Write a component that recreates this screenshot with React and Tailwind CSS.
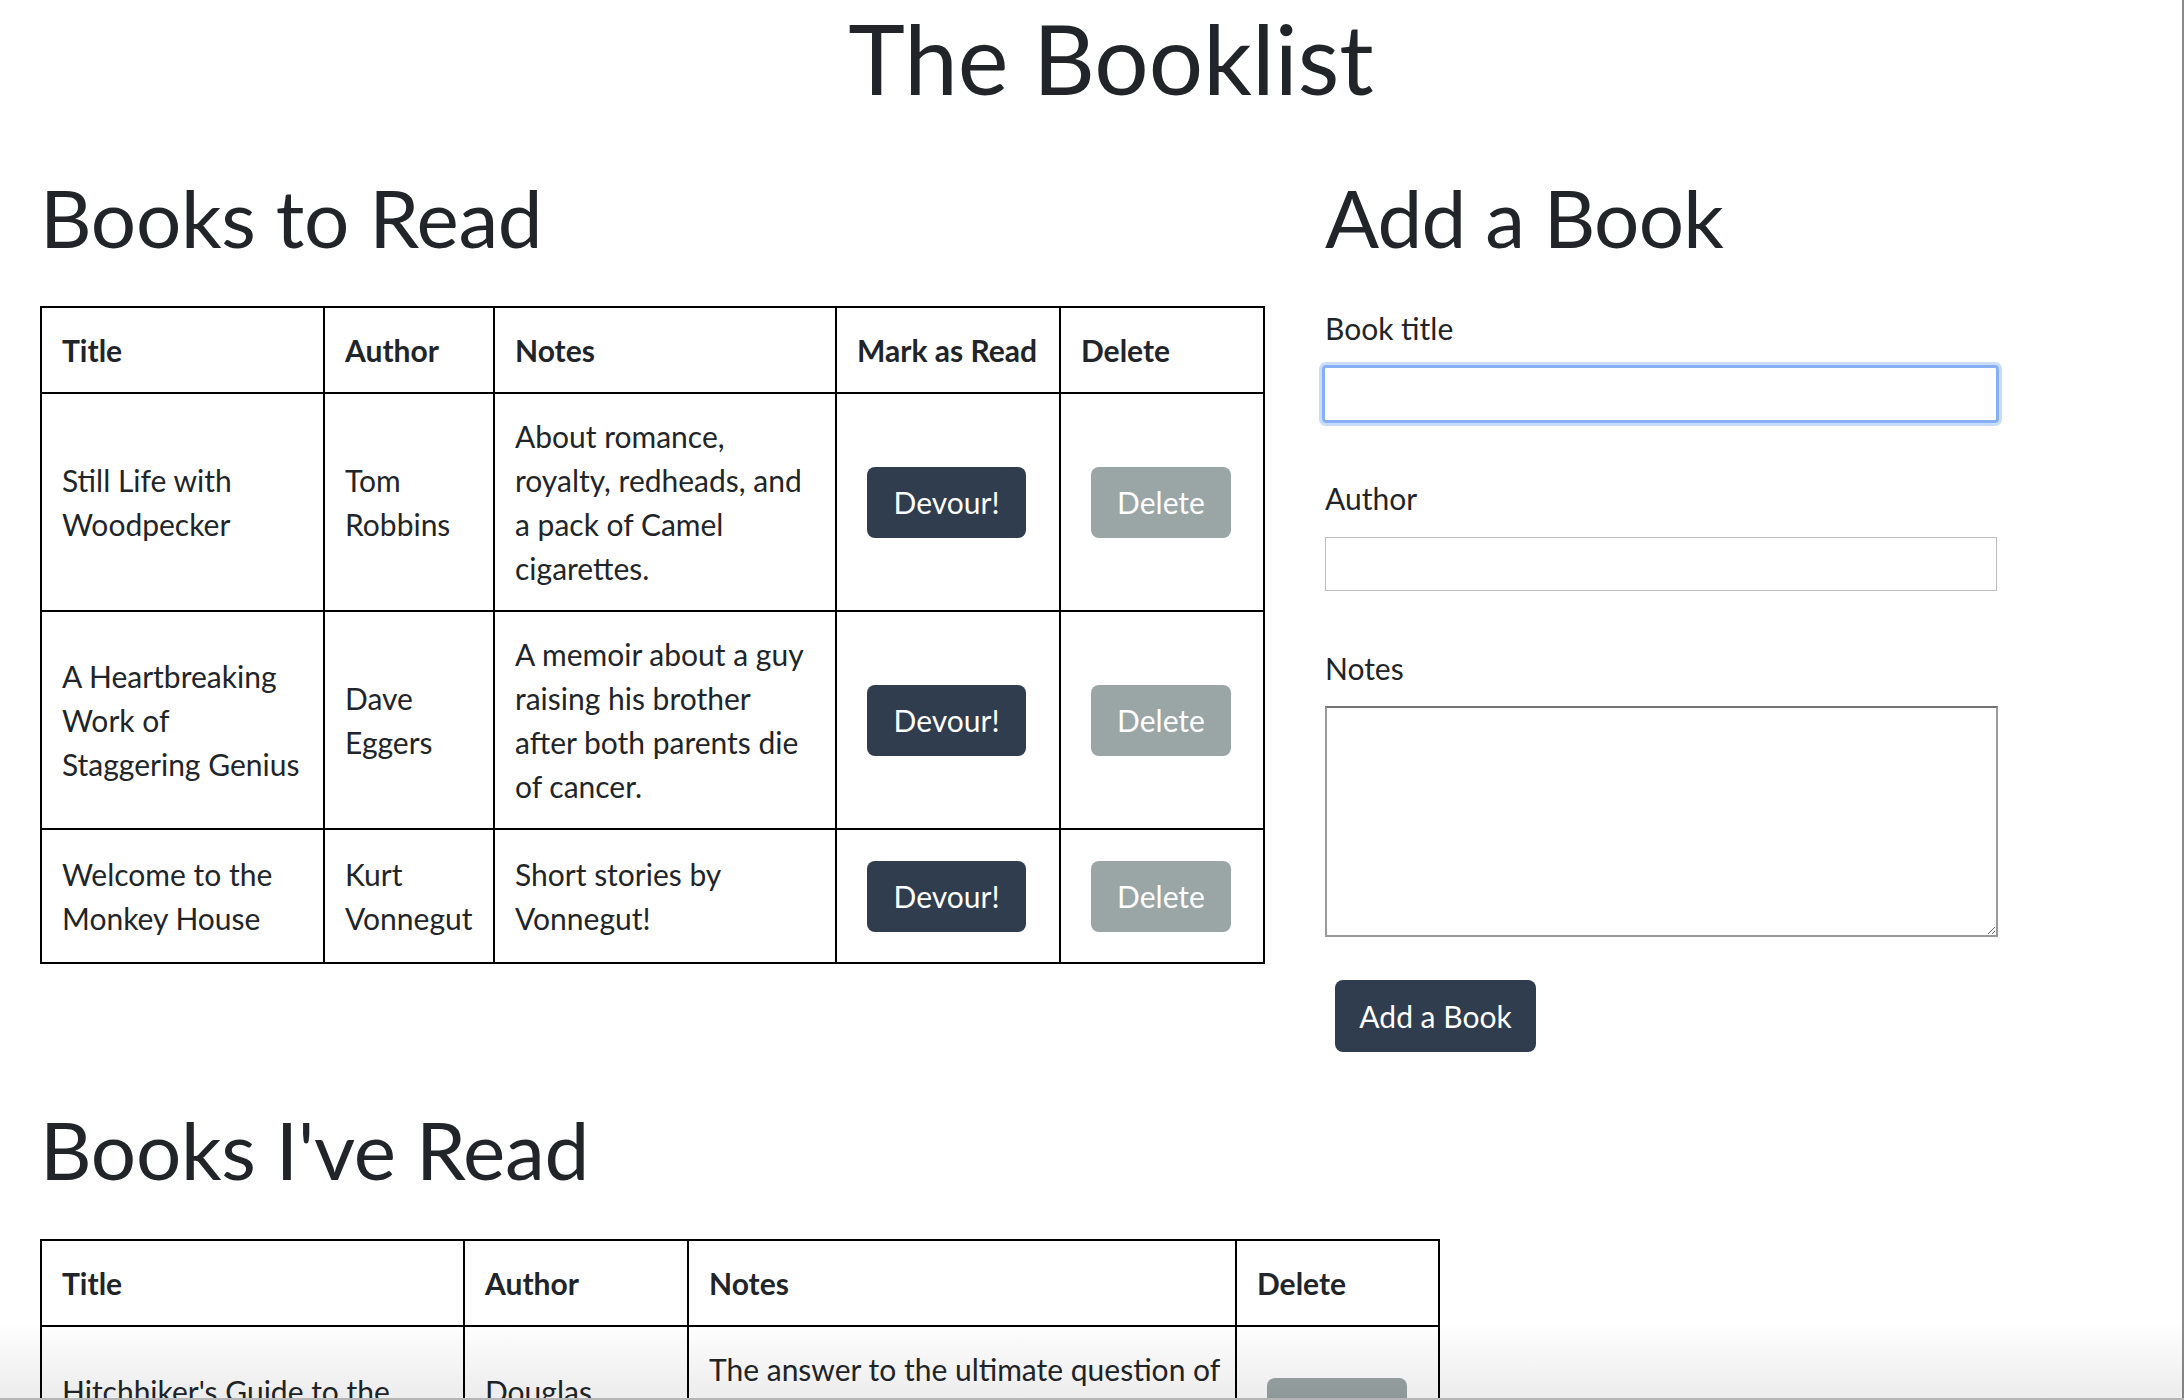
import React from "react";

const toRead = [
  {
    title: ["Still Life with", "Woodpecker"],
    author: ["Tom", "Robbins"],
    notes: ["About romance,", "royalty, redheads, and", "a pack of Camel", "cigarettes."],
  },
  {
    title: ["A Heartbreaking", "Work of", "Staggering Genius"],
    author: ["Dave", "Eggers"],
    notes: ["A memoir about a guy", "raising his brother", "after both parents die", "of cancer."],
  },
  {
    title: ["Welcome to the", "Monkey House"],
    author: ["Kurt", "Vonnegut"],
    notes: ["Short stories by", "Vonnegut!"],
  },
];

const alreadyRead = [
  {
    title: ["Hitchhiker's Guide to the", "Galaxy"],
    author: ["Douglas", "Adams"],
    notes: ["The answer to the ultimate question of", "life, the universe, and everything", "is 42."],
  },
];

// keep the original line breaks of the screenshot
function Lines({ lines }) {
  return lines.map((line, i) => (
    <span key={i} className="block whitespace-nowrap">
      {line}
    </span>
  ));
}

const cell = "border-r-2 border-b-2 border-black px-[20px] py-[20px] align-middle";
const head = `${cell} text-left font-bold`;

function ButtonCell({ children }) {
  return (
    <td className={cell}>
      <div className="h-[92px] flex items-center justify-center">{children}</div>
    </td>
  );
}

function DevourButton() {
  return (
    <button className="-ml-[3px] w-[159px] h-[71px] rounded-[8px] bg-[#2f3d4e] text-white text-[30px] leading-[44px]">
      Devour!
    </button>
  );
}

function DeleteButton() {
  return (
    <button className="-ml-[2px] w-[140px] h-[71px] rounded-[8px] bg-[#9aa5a6] text-white text-[30px] leading-[44px]">
      Delete
    </button>
  );
}

function ToReadTable() {
  return (
    <table className="table-fixed border-separate border-spacing-0 border-l-2 border-t-2 border-black w-[1223px]">
      <thead>
        <tr>
          <th className={`${head} w-[283px]`}>Title</th>
          <th className={`${head} w-[170px]`}>Author</th>
          <th className={`${head} w-[342px]`}>Notes</th>
          <th className={`${head} w-[224px]`}>Mark as Read</th>
          <th className={`${head} w-[204px]`}>Delete</th>
        </tr>
      </thead>
      <tbody>
        {toRead.map((book, i) => (
          <tr key={i}>
            <td className={cell}>
              <Lines lines={book.title} />
            </td>
            <td className={cell}>
              <Lines lines={book.author} />
            </td>
            <td className={cell}>
              <Lines lines={book.notes} />
            </td>
            <ButtonCell>
              <DevourButton />
            </ButtonCell>
            <ButtonCell>
              <DeleteButton />
            </ButtonCell>
          </tr>
        ))}
      </tbody>
    </table>
  );
}

function ReadTable() {
  return (
    <table className="table-fixed border-separate border-spacing-0 border-l-2 border-t-2 border-black w-[1398px]">
      <thead>
        <tr>
          <th className={`${head} w-[423px]`}>Title</th>
          <th className={`${head} w-[224px]`}>Author</th>
          <th className={`${head} w-[548px]`}>Notes</th>
          <th className={`${head} w-[203px]`}>Delete</th>
        </tr>
      </thead>
      <tbody>
        {alreadyRead.map((book, i) => (
          <tr key={i}>
            <td className={cell}>
              <Lines lines={book.title} />
            </td>
            <td className={cell}>
              <Lines lines={book.author} />
            </td>
            <td className={cell}>
              <Lines lines={book.notes} />
            </td>
            <ButtonCell>
              <DeleteButton />
            </ButtonCell>
          </tr>
        ))}
      </tbody>
    </table>
  );
}

function AddBookForm() {
  return (
    <form className="flex flex-col items-start" onSubmit={(e) => e.preventDefault()}>
      <label className="block h-[44px] mt-[41px]">Book title</label>
      <input
        autoFocus
        type="text"
        className="block mt-[15px] -ml-[3px] w-[677px] h-[58px] rounded-[4px] border-[3px] border-[#86b0f3] shadow-[0_0_0_3px_#c9dcfb] outline-none"
      />
      <label className="block h-[44px] mt-[53px]">Author</label>
      <input
        type="text"
        className="block mt-[17px] w-[672px] h-[54px] border border-[#bdbdbd] outline-none"
      />
      <label className="block h-[44px] mt-[55px]">Notes</label>
      <textarea className="block mt-[16px] w-[673px] h-[231px] border-2 border-[#9a9a9a] border-t-[#737373] outline-none" />
      <button className="mt-[43px] ml-[10px] w-[201px] h-[72px] rounded-[8px] bg-[#2f3d4e] text-white text-[30px] leading-[44px]">
        Add a Book
      </button>
    </form>
  );
}

export default function App() {
  return (
    <div className="relative bg-white text-[#212529] font-['Lato',sans-serif] text-[30px] leading-[44px] min-h-screen">
      <div className="pl-[40px] w-[2182px]">
        <h1 className="text-center text-[96px] leading-[115px] h-[115px]">The Booklist</h1>

        <div className="flex mt-[54px]">
          <section className="w-[1285px] shrink-0">
            <h2 className="text-[80px] leading-[96px] tracking-[-0.3px]">Books to Read</h2>
            <div className="mt-[41px]">
              <ToReadTable />
            </div>
          </section>
          <section className="flex-1">
            <h2 className="text-[80px] leading-[96px] tracking-[-0.8px]">Add a Book</h2>
            <AddBookForm />
          </section>
        </div>

        <section className="mt-[49px] pb-[80px]">
          <h2 className="text-[80px] leading-[96px] tracking-[-0.3px]">Books I've Read</h2>
          <div className="mt-[42px]">
            <ReadTable />
          </div>
        </section>
      </div>

      {/* window frame of the screenshot */}
      <div className="fixed top-0 right-0 w-[2px] h-full bg-[#8a8a8a]" />
      <div className="fixed bottom-0 left-0 w-full h-[80px] bg-gradient-to-b from-white to-[#ececec] mix-blend-multiply pointer-events-none" />
      <div className="fixed bottom-0 left-0 w-full h-[2px] bg-[#b5b5b5]" />
    </div>
  );
}
